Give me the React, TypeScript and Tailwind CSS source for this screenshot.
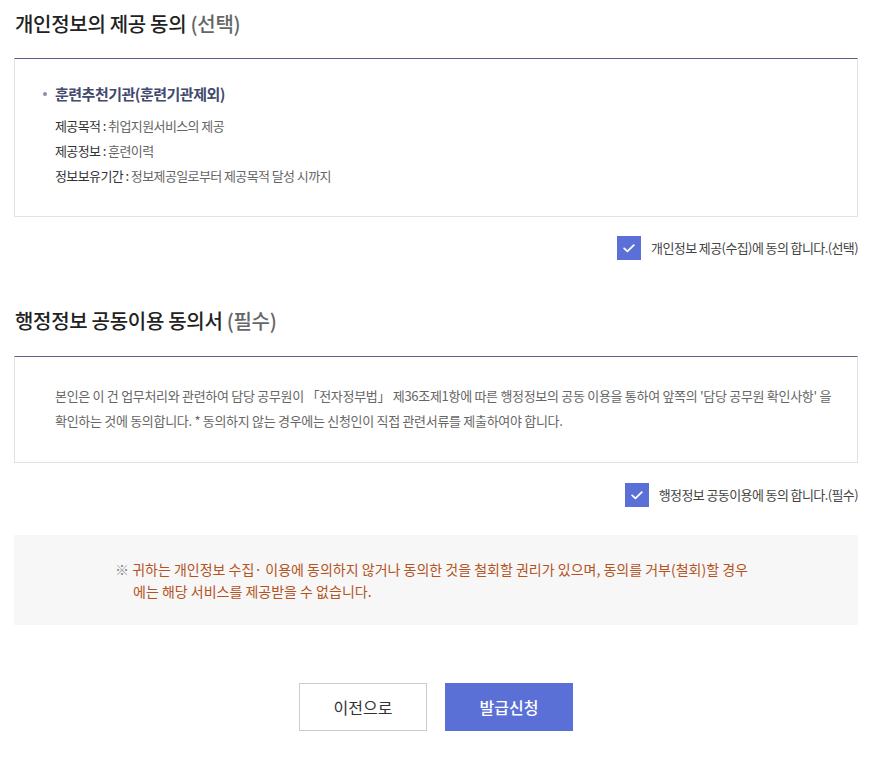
import React from "react";

const font = { fontFamily: '"Noto Sans CJK KR", "Noto Sans", sans-serif' };

function Check() {
  return (
    <span className="flex h-[24px] w-[24px] items-center justify-center bg-[#5a70d6]">
      <svg width="12" height="9" viewBox="0 0 12 9" fill="none">
        <path d="M1.2 4.4L4.4 7.4L10.8 1.2" stroke="#fff" strokeWidth="1.8" strokeLinecap="round" strokeLinejoin="round" />
      </svg>
    </span>
  );
}

export default function App() {
  return (
    <div style={font} className="w-[886px] bg-white pb-[28px] text-[#333]">
      <div className="ml-[14px] w-[844px]">
        <h2 className="pt-[10px] pl-[1px] text-[20px] font-medium leading-[28px] tracking-[-0.3px] text-[#222]">
          개인정보의 제공 동의 <span className="text-[#666]">(선택)</span>
        </h2>
        <div className="mt-[20px] h-[159px] border border-t-[#5b5f80] border-x-[#e2e2e2] border-b-[#e2e2e2] pl-[28px] pt-[24px]">
          <div className="flex items-center text-[15px] font-bold leading-[22px] tracking-[-0.5px] text-[#434a6e]">
            <span className="mr-[8px] h-[4px] w-[4px] rounded-full bg-[#8a8fa6]"></span>
            훈련추천기관(훈련기관제외)
          </div>
          <div className="mt-[8px] pl-[12px] text-[13px] leading-[25px] tracking-[-0.6px]">
            <div><span className="text-[#333]">제공목적 : </span><span className="text-[#666]">취업지원서비스의 제공</span></div>
            <div><span className="text-[#333]">제공정보 : </span><span className="text-[#666]">훈련이력</span></div>
            <div><span className="text-[#333]">정보보유기간 : </span><span className="text-[#666]">정보제공일로부터 제공목적 달성 시까지</span></div>
          </div>
        </div>
        <div className="mt-[19px] flex items-center justify-end gap-[10px]">
          <Check />
          <span className="text-[13px] leading-[24px] tracking-[-0.6px] text-[#444]">개인정보 제공(수집)에 동의 합니다.(선택)</span>
        </div>

        <h2 className="mt-[47px] pl-[1px] text-[20px] font-medium leading-[28px] tracking-[-0.3px] text-[#222]">
          행정정보 공동이용 동의서 <span className="text-[#666]">(필수)</span>
        </h2>
        <div className="mt-[21px] h-[107px] border border-t-[#5b5f80] border-x-[#e2e2e2] border-b-[#e2e2e2] pl-[40px] pr-[20px] pt-[26px] text-[13px] leading-[25px] tracking-[-0.3px] text-[#666]">
          본인은 이 건 업무처리와 관련하여 담당 공무원이 「전자정부법」 제36조제1항에 따른 행정정보의 공동 이용을 통하여 앞쪽의 '담당 공무원 확인사항' 을 확인하는 것에 동의합니다. * 동의하지 않는 경우에는 신청인이 직접 관련서류를 제출하여야 합니다.
        </div>
        <div className="mt-[20px] flex items-center justify-end gap-[10px]">
          <Check />
          <span className="text-[13px] leading-[24px] tracking-[-0.6px] text-[#444]">행정정보 공동이용에 동의 합니다.(필수)</span>
        </div>

        <div className="mt-[28px] flex h-[90px] items-center bg-[#f7f7f7] pl-[101px]">
          <p className="w-[640px] break-all pl-[18px] -indent-[18px] text-[14px] leading-[22px] tracking-[0px] text-[#b4531e]">
            <span className="text-[#888]">※</span> 귀하는 개인정보 수집· 이용에 동의하지 않거나 동의한 것을 철회할 권리가 있으며, 동의를 거부(철회)할 경우에는 해당 서비스를 제공받을 수 없습니다.
          </p>
        </div>

        <div className="mt-[58px] flex justify-center gap-[18px]">
          <button className="h-[48px] w-[128px] border border-[#cccccc] bg-white text-[16px] text-[#333]">이전으로</button>
          <button className="h-[48px] w-[128px] bg-[#5a70d6] text-[16px] font-medium text-white">발급신청</button>
        </div>
      </div>
    </div>
  );
}
